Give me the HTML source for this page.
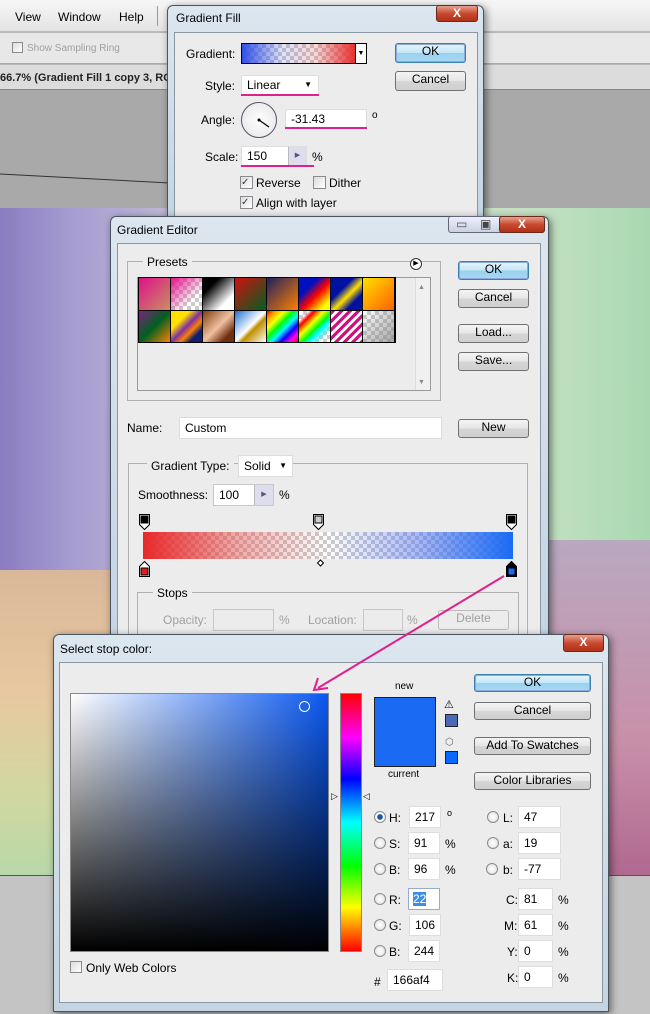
<!DOCTYPE html>
<html><head><style>
*{box-sizing:border-box;margin:0;padding:0}
body{width:650px;height:1014px;overflow:hidden;position:relative;font-family:"Liberation Sans",sans-serif;font-size:12px;color:#000;background:#b8b8b8}
.a{position:absolute}
.t{position:absolute;white-space:nowrap;line-height:14px}
.btn{position:absolute;border:1px solid #707070;border-radius:3px;background:linear-gradient(#f4f4f4,#e6e6e6 50%,#d6d6d6 51%,#cfcfcf);text-align:center;line-height:15px;font-size:12px}
.ok{border-color:#3c7fb1;background:linear-gradient(#e8f6fd,#c4e5f6 50%,#98d1ef 51%,#a8d8f2);box-shadow:inset 0 0 0 1px #8ad}
.in{position:absolute;background:#fff;border:1px solid #c8c8c8;line-height:18px;padding-left:5px}
.chk{position:absolute;width:13px;height:13px;border:1px solid #8a8a8a;background:linear-gradient(135deg,#dcdcdc,#fff)}
.rad{position:absolute;width:12px;height:12px;border:1px solid #8a8a8a;border-radius:50%;background:radial-gradient(#fff,#ddd)}
.win{position:absolute;background:linear-gradient(#dce6ef,#c4d4e2);border:1px solid #4a5560;border-radius:6px 6px 0 0;box-shadow:2px 2px 8px rgba(0,0,0,.5)}
.panel{position:absolute;background:#ececec;border:1px solid #8a97a3}
.close{position:absolute;border:1px solid #6a2a1a;border-radius:3px;background:linear-gradient(#e8a090,#c84a30 50%,#b03018);color:#fff;font-weight:bold;text-align:center;font-size:12px;line-height:14px}
.grp{position:absolute;border:1px solid #b0b0b0}
.gray{color:#a0a0a0}
</style></head><body>
<div class="a" style="left:0;top:0;width:650px;height:32px;background:linear-gradient(#f6f6f6,#e4e4e4);border-bottom:1px solid #bbb"></div>
<div class="t" style="left:15px;top:10px">View</div><div class="t" style="left:58px;top:10px">Window</div><div class="t" style="left:119px;top:10px">Help</div>
<div class="a" style="left:157px;top:6px;width:1px;height:20px;background:#999"></div>
<div class="a" style="left:0;top:33px;width:650px;height:31px;background:#e8e8e8;border-bottom:1px solid #aaa"></div>
<div class="chk" style="left:12px;top:42px;width:11px;height:11px"></div><div class="t gray" style="left:27px;top:42px;font-size:10px">Show Sampling Ring</div>
<div class="a" style="left:0;top:65px;width:650px;height:25px;background:#dcdcdc;border-bottom:1px solid #888"></div>
<div class="t" style="left:0;top:71px;font-size:11px;font-weight:bold;color:#222">66.7% (Gradient Fill 1 copy 3, RG</div>
<div class="a" style="left:0;top:90px;width:650px;height:118px;background:#a9a9a9"></div>
<svg class="a" style="left:0;top:170px" width="170" height="20"><line x1="0" y1="4" x2="170" y2="13" stroke="#333" stroke-width="1"/></svg>
<div class="a" style="left:0;top:208px;width:650px;height:667px;background:linear-gradient(90deg,#8a7cc0 0%,#a39ad0 10%,#c8c0d8 30%,#d8e0d0 60%,#c0e0c0 85%,#a8d8b0 100%)"></div>
<div class="a" style="left:0;top:570px;width:120px;height:305px;background:linear-gradient(#d8b898,#e8c8a0 40%,#d0d8a0 75%,#b8d8a8)"></div>
<div class="a" style="left:545px;top:540px;width:105px;height:335px;background:linear-gradient(#b8a8c0,#c890a8 60%,#b06890)"></div>
<div class="a" style="left:0;top:875px;width:650px;height:139px;background:#c4c4c4;border-top:1px solid #555"></div>

<div class="win" style="left:167px;top:5px;width:317px;height:215px"></div>
<div class="t" style="left:176px;top:11px">Gradient Fill</div>
<div class="close" style="left:436px;top:5px;width:42px;height:17px">X</div>
<div class="panel" style="left:174px;top:32px;width:304px;height:188px;border-bottom:none"></div>
<div class="t" style="left:186px;top:47px">Gradient:</div>
<div class="a" style="left:241px;top:43px;width:115px;height:21px;border:1px solid #000;background:linear-gradient(90deg,#3050e8,rgba(90,110,230,.2) 35%,rgba(230,100,100,.25) 65%,#e83030),conic-gradient(#ccc 25%,#fff 25% 50%,#ccc 50% 75%,#fff 75%) 0 0/8px 8px"></div>
<div class="a" style="left:356px;top:43px;width:11px;height:21px;border:1px solid #000;border-left:none;background:#fff;font-size:7px;text-align:center;line-height:19px">▼</div>
<div class="btn ok" style="left:395px;top:43px;width:71px;height:20px">OK</div>
<div class="btn" style="left:395px;top:71px;width:71px;height:20px">Cancel</div>
<div class="t" style="left:205px;top:79px">Style:</div>
<div class="in" style="left:241px;top:75px;width:78px;height:21px;border-color:#ddd">Linear<span style="position:absolute;right:6px;font-size:8px">▼</span></div>
<div class="a" style="left:241px;top:94px;width:78px;height:2px;background:#e0208c"></div>
<div class="t" style="left:201px;top:113px">Angle:</div>
<div class="a" style="left:241px;top:102px;width:36px;height:36px;border:1px solid #556;border-radius:50%;background:radial-gradient(#fff,#e4e4e4)"></div>
<svg class="a" style="left:241px;top:102px" width="36" height="36"><line x1="18" y1="18" x2="28" y2="25" stroke="#000" stroke-width="1.3"/><circle cx="18" cy="18" r="1.5"/></svg>
<div class="in" style="left:285px;top:109px;width:82px;height:20px;border-color:#ddd">-31.43</div>
<div class="a" style="left:285px;top:127px;width:82px;height:2px;background:#e0208c"></div>
<div class="t" style="left:372px;top:109px;font-size:10px">o</div>
<div class="t" style="left:205px;top:150px">Scale:</div>
<div class="in" style="left:241px;top:146px;width:66px;height:20px;border-color:#ddd">150</div>
<div class="a" style="left:288px;top:147px;width:18px;height:18px;background:#dde;border-left:1px solid #bbb;font-size:7px;text-align:center;line-height:18px;color:#557">▶</div>
<div class="a" style="left:241px;top:165px;width:73px;height:2px;background:#e0208c"></div>
<div class="t" style="left:312px;top:150px">%</div>
<div class="chk" style="left:240px;top:176px;font-size:10px;line-height:11px;color:#335">✓</div><div class="t" style="left:256px;top:176px">Reverse</div>
<div class="chk" style="left:313px;top:176px"></div><div class="t" style="left:329px;top:176px">Dither</div>
<div class="chk" style="left:240px;top:196px;font-size:10px;line-height:11px;color:#335">✓</div><div class="t" style="left:256px;top:196px">Align with layer</div>

<div class="win" style="left:110px;top:216px;width:439px;height:430px"></div>
<div class="t" style="left:117px;top:223px">Gradient Editor</div>
<div class="a" style="left:448px;top:216px;width:97px;height:17px;border:1px solid #667;border-radius:3px;background:linear-gradient(#eef,#c8d4e0)"></div>
<div class="t" style="left:456px;top:217px;color:#555">▭</div><div class="t" style="left:480px;top:217px;color:#444">▣</div>
<div class="close" style="left:499px;top:216px;width:46px;height:17px">X</div>
<div class="panel" style="left:117px;top:243px;width:424px;height:400px;border-bottom:none"></div>
<div class="grp" style="left:127px;top:261px;width:314px;height:140px"></div>
<div class="t" style="left:143px;top:255px;background:#ececec;padding:0 4px">Presets</div>
<div class="a" style="left:410px;top:258px;width:12px;height:12px;border:1px solid #333;border-radius:50%;background:#fff;font-size:7px;line-height:10px;text-align:center">▶</div>
<div class="a" style="left:137px;top:277px;width:294px;height:114px;border:1px solid #999;background:#ececec"></div>
<div class="a" style="left:415px;top:278px;width:15px;height:112px;background:#f0f0f0;border-left:1px solid #ddd"></div>
<div class="t" style="left:418px;top:281px;font-size:7px;color:#888">▲</div><div class="t" style="left:418px;top:376px;font-size:7px;color:#888">▼</div>
<div class="a" style="left:138px;top:277px;width:258px;height:66px;background:#000;display:grid;grid-template-columns:repeat(8,31px);grid-gap:1px;padding:1px">
<div style="background:linear-gradient(135deg,#e0108c,#c89060)"></div>
<div style="background:linear-gradient(135deg,#e8108c,rgba(255,255,255,0) 70%),conic-gradient(#ccc 25%,#fff 25% 50%,#ccc 50% 75%,#fff 75%) 0 0/8px 8px"></div>
<div style="background:linear-gradient(135deg,#000 25%,#fff 75%)"></div>
<div style="background:linear-gradient(135deg,#d01010,#006020)"></div>
<div style="background:linear-gradient(135deg,#202060,#ff8000)"></div>
<div style="background:linear-gradient(135deg,#0010c0 30%,#ff0000 55%,#ffff00 85%)"></div>
<div style="background:linear-gradient(135deg,#0010a0 35%,#ffe000 55%,#0010a0 75%)"></div>
<div style="background:linear-gradient(135deg,#ffe000,#ff6000)"></div>
<div style="background:linear-gradient(135deg,#802080,#006020 50%,#ff8000)"></div>
<div style="background:linear-gradient(135deg,#ffe000 30%,#8030a0 50%,#ff8000 65%,#102070 80%)"></div>
<div style="background:linear-gradient(135deg,#804010,#f0c0a0 50%,#703010 80%)"></div>
<div style="background:linear-gradient(135deg,#2070d0,#fff 50%,#c09000 60%,#fff)"></div>
<div style="background:linear-gradient(135deg,red,orange,yellow,lime,cyan,blue,magenta,red)"></div>
<div style="background:linear-gradient(135deg,rgba(255,0,0,0) 15%,red 25%,yellow 40%,lime 55%,cyan 65%,rgba(0,0,255,0) 85%),conic-gradient(#ccc 25%,#fff 25% 50%,#ccc 50% 75%,#fff 75%) 0 0/8px 8px"></div>
<div style="background:repeating-linear-gradient(135deg,#d01080 0 3px,#fff 3px 6px)"></div>
<div style="background:linear-gradient(135deg,rgba(128,128,128,0),rgba(128,128,128,.7)),conic-gradient(#ccc 25%,#fff 25% 50%,#ccc 50% 75%,#fff 75%) 0 0/8px 8px"></div>
</div>
<div class="btn ok" style="left:458px;top:261px;width:71px;height:19px">OK</div>
<div class="btn" style="left:458px;top:289px;width:71px;height:19px">Cancel</div>
<div class="btn" style="left:458px;top:324px;width:71px;height:19px">Load...</div>
<div class="btn" style="left:458px;top:352px;width:71px;height:19px">Save...</div>
<div class="t" style="left:127px;top:421px">Name:</div>
<div class="in" style="left:179px;top:417px;width:263px;height:22px;border-color:#ddd;line-height:20px">Custom</div>
<div class="btn" style="left:458px;top:419px;width:71px;height:19px">New</div>
<div class="grp" style="left:128px;top:463px;width:400px;height:180px;border-bottom:none"></div>
<div class="t" style="left:147px;top:459px;background:#ececec;padding:0 4px">Gradient Type:</div>
<div class="in" style="left:238px;top:455px;width:55px;height:22px;border-color:#ddd;line-height:20px">Solid<span style="position:absolute;right:5px;font-size:8px">▼</span></div>
<div class="t" style="left:138px;top:488px">Smoothness:</div>
<div class="in" style="left:213px;top:484px;width:61px;height:22px;line-height:20px">100</div>
<div class="a" style="left:254px;top:485px;width:19px;height:20px;background:#dde;border-left:1px solid #bbb;font-size:7px;text-align:center;line-height:20px;color:#557">▶</div>
<div class="t" style="left:279px;top:488px">%</div>
<svg class="a" style="left:136px;top:512px" width="390" height="70">
<g stroke="#000" stroke-width="1"><path d="M3.5 2.5h10v10l-5 5l-5-5z" fill="#fff"/><rect x="5" y="4" width="7" height="7" fill="#000"/>
<path d="M177.5 2.5h10v10l-5 5l-5-5z" fill="#fff"/><rect x="179" y="4" width="7" height="7" fill="#ccc"/>
<path d="M370.5 2.5h10v10l-5 5l-5-5z" fill="#fff"/><rect x="372" y="4" width="7" height="7" fill="#000"/>
<path d="M3.5 64.5v-10l5-5l5 5v10z" fill="#fff"/><rect x="5" y="56" width="7" height="7" fill="#e02020"/>
<path d="M370.5 64.5v-10l5-5l5 5v10z" fill="#000"/><rect x="372" y="56" width="7" height="7" fill="#1a6af4"/>
<path d="M184.5 48l3 3l-3 3l-3-3z" fill="#fff"/></g></svg>
<div class="a" style="left:143px;top:532px;width:370px;height:27px;background:linear-gradient(90deg,#e82828,rgba(230,80,80,.5) 25%,rgba(255,255,255,0) 50%,rgba(80,110,240,.5) 75%,#1a6af4),conic-gradient(#ccc 25%,#fff 25% 50%,#ccc 50% 75%,#fff 75%) 0 0/8px 8px"></div>
<div class="grp" style="left:137px;top:592px;width:382px;height:60px;border-bottom:none"></div>
<div class="t" style="left:153px;top:586px;background:#ececec;padding:0 4px">Stops</div>
<div class="t gray" style="left:163px;top:613px">Opacity:</div>
<div class="in" style="left:213px;top:609px;width:61px;height:22px;background:#ececec"></div>
<div class="t gray" style="left:279px;top:613px">%</div>
<div class="t gray" style="left:308px;top:613px">Location:</div>
<div class="in" style="left:363px;top:609px;width:40px;height:22px;background:#ececec"></div>
<div class="t gray" style="left:407px;top:613px">%</div>
<div class="btn gray" style="left:438px;top:610px;width:71px;height:20px;background:#ececec;border-color:#bbb">Delete</div>

<div class="win" style="left:53px;top:634px;width:556px;height:378px"></div>
<div class="t" style="left:60px;top:642px">Select stop color:</div>
<div class="close" style="left:563px;top:634px;width:41px;height:18px">X</div>
<div class="panel" style="left:59px;top:662px;width:544px;height:341px"></div>
<div class="a" style="left:70px;top:693px;width:259px;height:259px;border:1px solid #888;background:linear-gradient(rgba(0,0,0,0),#000),linear-gradient(90deg,#fff,#0a58f0)"></div>
<div class="a" style="left:299px;top:701px;width:11px;height:11px;border:1px solid #fff;border-radius:50%"></div>
<div class="a" style="left:340px;top:693px;width:22px;height:259px;border:1px solid #888;background:linear-gradient(red,magenta 17%,blue 33%,cyan 50%,lime 67%,yellow 83%,red)"></div>
<div class="t" style="left:331px;top:789px;font-size:9px">▷</div><div class="t" style="left:363px;top:789px;font-size:9px">◁</div>
<div class="t" style="left:395px;top:680px;font-size:10px">new</div>
<div class="a" style="left:374px;top:697px;width:62px;height:70px;border:1px solid #222;background:#1a6af4"></div>
<div class="t" style="left:388px;top:768px;font-size:10px">current</div>
<div class="t" style="left:444px;top:698px;font-size:11px">⚠</div>
<div class="a" style="left:445px;top:714px;width:13px;height:13px;border:1px solid #222;background:#4a6ab8"></div>
<div class="t" style="left:445px;top:736px;font-size:10px;color:#666">⬡</div>
<div class="a" style="left:445px;top:751px;width:13px;height:13px;border:1px solid #222;background:#0a6aff"></div>
<div class="btn ok" style="left:474px;top:674px;width:117px;height:18px">OK</div>
<div class="btn" style="left:474px;top:702px;width:117px;height:18px">Cancel</div>
<div class="btn" style="left:474px;top:737px;width:117px;height:18px">Add To Swatches</div>
<div class="btn" style="left:474px;top:772px;width:117px;height:18px">Color Libraries</div>

<div class="rad" style="left:374px;top:811px;background:radial-gradient(#1a5aa0 35%,#fff 45%,#ddd)"></div><div class="t" style="left:389px;top:811px">H:</div><div class="in" style="left:409px;top:806px;width:32px;height:22px;border-color:#ddd;line-height:20px">217</div><div class="t" style="left:447px;top:806px;font-size:9px">o</div>
<div class="rad" style="left:374px;top:837px"></div><div class="t" style="left:389px;top:837px">S:</div><div class="in" style="left:408px;top:832px;width:32px;height:22px;border-color:#ddd;line-height:20px">91</div><div class="t" style="left:445px;top:837px">%</div>
<div class="rad" style="left:374px;top:863px"></div><div class="t" style="left:389px;top:863px">B:</div><div class="in" style="left:408px;top:858px;width:32px;height:22px;border-color:#ddd;line-height:20px">96</div><div class="t" style="left:445px;top:863px">%</div>
<div class="rad" style="left:374px;top:893px"></div><div class="t" style="left:389px;top:893px">R:</div><div class="in" style="left:408px;top:888px;width:32px;height:22px;border-color:#9ac;line-height:20px;padding-left:4px"><span style="background:#3a8ee6;color:#fff">22</span></div>
<div class="rad" style="left:374px;top:919px"></div><div class="t" style="left:389px;top:919px">G:</div><div class="in" style="left:409px;top:914px;width:32px;height:22px;border-color:#ddd;line-height:20px">106</div>
<div class="rad" style="left:374px;top:945px"></div><div class="t" style="left:389px;top:945px">B:</div><div class="in" style="left:408px;top:940px;width:32px;height:22px;border-color:#ddd;line-height:20px">244</div>
<div class="t" style="left:374px;top:975px">#</div><div class="in" style="left:387px;top:969px;width:56px;height:22px;border-color:#ddd;line-height:20px">166af4</div>

<div class="rad" style="left:487px;top:811px"></div><div class="t" style="left:503px;top:811px">L:</div><div class="in" style="left:518px;top:806px;width:43px;height:22px;border-color:#ddd;line-height:20px">47</div>
<div class="rad" style="left:487px;top:837px"></div><div class="t" style="left:503px;top:837px">a:</div><div class="in" style="left:518px;top:832px;width:43px;height:22px;border-color:#ddd;line-height:20px">19</div>
<div class="rad" style="left:486px;top:863px"></div><div class="t" style="left:503px;top:863px">b:</div><div class="in" style="left:518px;top:858px;width:43px;height:22px;border-color:#ddd;line-height:20px">-77</div>
<div class="t" style="left:506px;top:893px">C:</div><div class="in" style="left:518px;top:888px;width:35px;height:22px;border-color:#ddd;line-height:20px">81</div><div class="t" style="left:558px;top:893px">%</div>
<div class="t" style="left:504px;top:919px">M:</div><div class="in" style="left:518px;top:914px;width:35px;height:22px;border-color:#ddd;line-height:20px">61</div><div class="t" style="left:558px;top:919px">%</div>
<div class="t" style="left:507px;top:945px">Y:</div><div class="in" style="left:518px;top:940px;width:35px;height:22px;border-color:#ddd;line-height:20px">0</div><div class="t" style="left:558px;top:945px">%</div>
<div class="t" style="left:507px;top:971px">K:</div><div class="in" style="left:518px;top:966px;width:35px;height:22px;border-color:#ddd;line-height:20px">0</div><div class="t" style="left:558px;top:971px">%</div>
<div class="chk" style="left:70px;top:961px;width:12px;height:12px"></div><div class="t" style="left:86px;top:961px">Only Web Colors</div>

<svg class="a" style="left:0;top:0" width="650" height="1014"><g stroke="#e0208c" stroke-width="2" fill="none"><line x1="504" y1="576" x2="318" y2="688"/><path d="M318 678 L314 690 L328 688"/></g></svg>
</body></html>
